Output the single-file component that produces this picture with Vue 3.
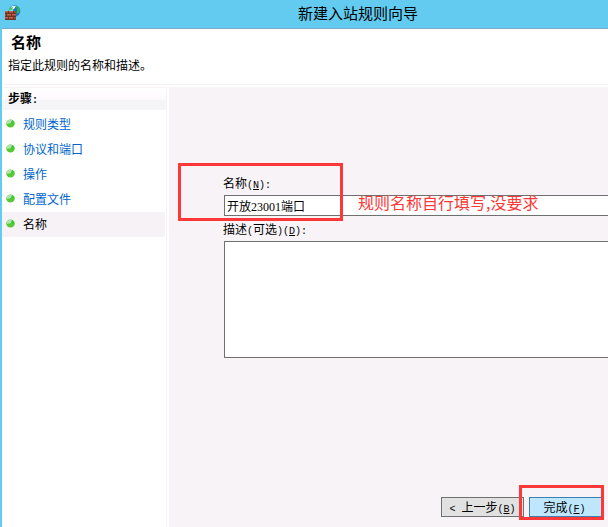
<template>
  <div class="wizard">
    <header class="title-bar">
      <svg class="app-icon" width="16" height="16" viewBox="0 0 16 16">
        <circle cx="9.5" cy="6" r="5.8" fill="#1673cf" />
        <path d="M4 5C5 2 8 0 10 1L8 5L10 8H5Z" fill="#7be6c5" />
        <path d="M11 1C13 1 14 3 15 5L14 8L12 9L12 5Z" fill="#35b54a" />
        <path d="M7 1L11 1L9 4H6Z" fill="#e9fff5" />
        <path d="M5 3L8 2L7 5H4Z" fill="#4cc35c" />
        <rect x="0" y="6" width="11" height="9" fill="#a04a35" />
        <path d="M0 8.5H11M0 11.5H11M0 14.5H11M3.5 6V8M8.5 6V8M1.5 9V11M6.5 9V11M3.5 12V14M8.5 12V14" stroke="#6b3226" />
        <path d="M0 6.5H3M4 6.5H8M2 9.5H6M7 9.5H11M0 12.5H3M4 12.5H8" stroke="#c0644e" />
      </svg>
      <h1 class="title">新建入站规则向导</h1>
    </header>

    <section class="intro">
      <h2 class="intro-title">名称</h2>
      <p class="intro-text">指定此规则的名称和描述。</p>
    </section>

    <div class="content">
      <nav class="steps">
        <h3 class="steps-title">步骤<span class="latin">:</span></h3>
        <ul class="step-list">
          <li
            v-for="step in steps"
            :key="step"
            class="step"
            :class="{ active: step === currentStep }"
          >
            <svg class="dot" width="10" height="10" viewBox="0 0 10 10">
              <ellipse cx="4.5" cy="4.5" rx="4.3" ry="4" fill="#58c936" />
              <path d="M.5 4A4 3.5 0 0 1 6 1L5 4L1 5Z" fill="#b8dfb2" />
              <path d="M6 1L8 3L7 5H5Z" fill="#27d52c" />
            </svg>
            <span v-if="step === currentStep">{{ step }}</span>
            <a v-else href="#" @click.prevent="currentStep = step">{{ step }}</a>
          </li>
        </ul>
      </nav>

      <main class="panel">
        <form class="form" @submit.prevent>
          <div class="name-field">
            <label class="label" for="rule-name">名称<span class="latin">(<u>N</u>):</span></label>
            <input id="rule-name" v-model="name" class="input" type="text" />
            <div class="mark name-mark"></div>
            <span class="note">规则名称自行填写,没要求</span>
          </div>
          <label class="label" for="rule-desc">描述<span class="latin">(</span>可选<span class="latin">)(<u>D</u>):</span></label>
          <textarea id="rule-desc" v-model="description" class="textarea"></textarea>
          <div class="actions">
            <button type="button" class="btn"><span class="latin">&lt; </span>上一步<span class="latin">(<u>B</u>)</span></button>
            <div class="finish">
              <button type="submit" class="btn primary">完成<span class="latin">(<u>F</u>)</span></button>
              <div class="mark finish-mark"></div>
            </div>
          </div>
        </form>
      </main>
    </div>
  </div>
</template>

<script setup>
import { ref } from 'vue'

const steps = ['规则类型', '协议和端口', '操作', '配置文件', '名称']
const currentStep = ref('名称')
const name = ref('开放23001端口')
const description = ref('')
</script>

<style>
body {
  margin: 0;
}
</style>

<style scoped>
.wizard {
  display: flex;
  flex-direction: column;
  box-sizing: border-box;
  min-height: 100vh;
  border-left: 2px solid #63cbf0;
  background: #fff;
  color: #000;
  font-family: "Liberation Sans", "Noto Sans CJK SC", sans-serif;
  font-size: 12px;
  overflow: hidden;
}

h1,
h2,
h3,
p,
ul {
  margin: 0;
  padding: 0;
}

.latin {
  font-family: "Liberation Mono", monospace;
  font-size: 10px;
  line-height: 12px;
  white-space: pre;
}

.title-bar {
  display: flex;
  align-items: center;
  height: 28px;
  margin-left: -2px;
  padding: 0 5px;
  background: #63cbf0;
  border-bottom: 1px solid #7ba9cb;
}

.app-icon {
  flex: none;
  margin-bottom: 3px;
}

.title {
  flex: 1;
  padding-left: 92px;
  text-align: center;
  font-size: 15px;
  font-weight: 400;
  line-height: 28px;
}

.intro {
  padding: 4px 6px 8px;
  border-bottom: 1px solid #f4f0f4;
}

.intro-title {
  padding-left: 3px;
  font-size: 15px;
  line-height: 20px;
}

.intro-text {
  padding-top: 3px;
  line-height: 20px;
}

.content {
  display: flex;
  flex: 1;
  gap: 2px;
  margin-top: 2px;
}

.steps {
  flex: none;
  box-sizing: border-box;
  width: 165px;
  border-top: 1px solid #f6f2f6;
  border-right: 1px solid #f6f2f6;
}

.steps-title {
  height: 22px;
  padding-left: 6px;
  font-size: 12px;
  line-height: 22px;
  background: linear-gradient(#fff, #fcf9fc 55%, #f5f4f6 55%);
}

.step-list {
  padding-top: 2px;
  list-style: none;
}

.step {
  display: flex;
  align-items: center;
  gap: 7px;
  box-sizing: border-box;
  height: 25px;
  margin-right: 1px;
  padding: 0 0 2px 4px;
}

.step.active {
  background: #f7f2f6;
}

.step a {
  color: #0066cc;
  text-decoration: none;
}

.dot {
  flex: none;
}

.panel {
  display: flex;
  flex: 1;
  min-width: 0;
  background: #f7f3f7;
}

.form {
  display: flex;
  flex: 1;
  flex-direction: column;
  min-width: 0;
  padding: 87px 0 10px 55px;
}

.name-field {
  position: relative;
  display: flex;
  flex-direction: column;
  margin-bottom: 4px;
}

.label {
  box-sizing: border-box;
  height: 21px;
  margin-left: -1px;
  line-height: 21px;
}

.input,
.textarea {
  box-sizing: border-box;
  width: 100%;
  margin: 0;
  border: 1px solid #707070;
  border-right: 0;
  border-radius: 0;
  background: #fff;
  color: #000;
  font-family: "Liberation Serif", "Noto Sans CJK SC", serif;
  font-size: 12px;
  outline: none;
}

.input {
  height: 21px;
  padding: 0 2px;
}

.textarea {
  height: 117px;
  padding: 2px;
  resize: none;
}

.mark {
  position: absolute;
  box-sizing: border-box;
  border: 3px solid #fc3838;
  pointer-events: none;
}

.name-mark {
  top: -11px;
  left: -46px;
  width: 165px;
  height: 58px;
}

.note {
  position: absolute;
  top: 17px;
  left: 134px;
  color: #fc3838;
  font-family: "Noto Sans CJK SC", sans-serif;
  font-size: 16px;
  line-height: 22px;
  white-space: nowrap;
  pointer-events: none;
}

.actions {
  display: flex;
  justify-content: flex-end;
  gap: 5px;
  margin-top: auto;
  padding-right: 4px;
}

.btn {
  box-sizing: border-box;
  width: 83px;
  height: 20px;
  padding: 2px 0 0;
  border: 1px solid #707070;
  border-radius: 0;
  background: #e1e1e1;
  color: #000;
  font-family: inherit;
  font-size: 12px;
  line-height: 16px;
  white-space: nowrap;
}

.btn.primary {
  display: block;
  width: 75px;
  padding-right: 4px;
  border-color: #3c7fb1;
  background: #bee6fd;
}

.finish {
  position: relative;
}

.finish-mark {
  top: -12px;
  left: -10px;
  width: 85px;
  height: 35px;
}
</style>
